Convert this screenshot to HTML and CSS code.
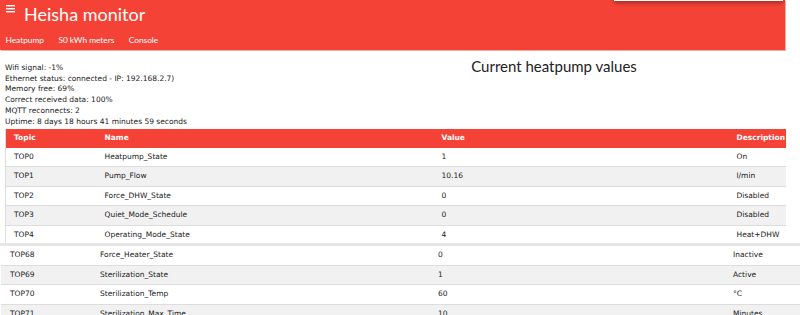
FILE: index.html
```html
<html>
    <head>
        <title>Heisha monitor</title>
        <link rel="stylesheet" href="styles.css">
    </head>
    <body>
        <div id="topbar">
            <div class="brand">
                <svg class="burger" width="10" height="8" viewBox="0 0 10 8">
                    <rect x="0" y="0" width="9" height="1.4" fill="#fff"/>
                    <rect x="0" y="3" width="9" height="1.4" fill="#fff"/>
                    <rect x="0" y="6" width="9" height="1.4" fill="#fff"/>
                </svg>
                <h1>Heisha monitor</h1>
            </div>
            <nav class="tabs">
                <a href="#">Heatpump</a>
                <a href="#">S0 kWh meters</a>
                <a href="#">Console</a>
            </nav>
            <div class="dropdown"></div>
        </div>

        <div class="summary">
            <div class="status">
                <div>Wifi signal: -1%</div>
                <div>Ethernet status: connected - IP: 192.168.2.7)</div>
                <div>Memory free: 69%</div>
                <div>Correct received data: 100%</div>
                <div>MQTT reconnects: 2</div>
                <div>Uptime: 8 days 18 hours 41 minutes 59 seconds</div>
            </div>
            <h2>Current heatpump values</h2>
        </div>

        <div class="shot first">
            <table class="values">
                <colgroup>
                    <col class="c-topic"><col class="c-name"><col class="c-value"><col class="c-desc">
                </colgroup>
                <tr class="head"><th>Topic</th><th>Name</th><th>Value</th><th>Description</th></tr>
                <tr><td>TOP0</td><td>Heatpump_State</td><td>1</td><td>On</td></tr>
                <tr class="alt"><td>TOP1</td><td>Pump_Flow</td><td>10.16</td><td>l/min</td></tr>
                <tr><td>TOP2</td><td>Force_DHW_State</td><td>0</td><td>Disabled</td></tr>
                <tr class="alt"><td>TOP3</td><td>Quiet_Mode_Schedule</td><td>0</td><td>Disabled</td></tr>
                <tr><td>TOP4</td><td>Operating_Mode_State</td><td>4</td><td>Heat+DHW</td></tr>
            </table>
        </div>

        <div class="shot second">
            <table class="values">
                <colgroup>
                    <col class="c-topic2"><col class="c-name2"><col class="c-value"><col class="c-desc2">
                </colgroup>
                <tr><td>TOP68</td><td>Force_Heater_State</td><td>0</td><td>Inactive</td></tr>
                <tr class="alt"><td>TOP69</td><td>Sterilization_State</td><td>1</td><td>Active</td></tr>
                <tr><td>TOP70</td><td>Sterilization_Temp</td><td>60</td><td>°C</td></tr>
                <tr class="alt"><td>TOP71</td><td>Sterilization_Max_Time</td><td>10</td><td>Minutes</td></tr>
            </table>
        </div>
    </body>
</html>
```

FILE: styles.css
```css
body{
    margin: 0;
    font-family: "DejaVu Sans", Verdana, sans-serif;
    font-size: 7.5px;
    color: #1a1a1a;
    overflow: hidden;
}
*{
    box-sizing: border-box;
}
table{
    font-size: inherit;
    color: inherit;
}

#topbar{
    position: relative;
    width: 785px;
    height: 50px;
    background: #f44336;
    box-shadow: 1px 1px 0 #f8aaa4;
    color: #fff;
}
.brand{
    display: flex;
    align-items: flex-start;
    height: 34px;
    padding: 2px 0 0 6px;
}
.burger{
    margin-top: 3px;
}
h1{
    margin: 0 0 0 8px;
    font-family: Lato, "Open Sans", sans-serif;
    font-size: 18px;
    font-weight: normal;
    line-height: 24px;
}
.tabs{
    display: flex;
    gap: 14.5px;
    padding-left: 5.5px;
}
.tabs a{
    color: #fff;
    text-decoration: none;
    font-family: Lato, "Open Sans", sans-serif;
    font-size: 8.3px;
    line-height: 12px;
}
.dropdown{
    position: absolute;
    left: 614px;
    top: -10px;
    width: 169px;
    height: 11px;
    background: #fff;
    box-shadow: 0 2px 4px rgba(0, 0, 0, .35);
}

.summary{
    display: flex;
    padding: 7px 12px 0 5px;
}
.status{
    width: 315px;
    margin-top: 6px;
    line-height: 10.7px;
}
h2{
    flex: 1;
    margin: 0;
    text-align: center;
    font-family: Lato, "Open Sans", sans-serif;
    font-size: 15px;
    font-weight: normal;
    line-height: 18px;
    color: #222;
}

.shot.first{
    height: 114px;
    margin-top: 2px;
    padding-left: 5px;
    overflow: hidden;
}
.shot.second{
    border-top: 3px solid #e6e6e6;
    padding-left: 1px;
}
.values{
    border-collapse: collapse;
    table-layout: fixed;
    white-space: nowrap;
}
.first .values{
    width: 780px;
    border-left: 1px solid #ddd;
}
.second .values{
    width: 799px;
}
.c-topic{ width: 95px; }
.c-topic2{ width: 95px; }
.c-name{ width: 337px; }
.c-name2{ width: 338px; }
.c-value{ width: 295px; }
.c-desc{ width: 53px; }
.c-desc2{ width: 71px; }

.values th, .values td{
    padding: 4px 4px;
    line-height: 10.5px;
    text-align: left;
    border-bottom: 1px solid #ddd;
}
.values th:first-child, .values td:first-child{
    padding-left: 8px;
}
.second .values td:first-child{
    padding-left: 9px;
}
.values .head{
    background: #f44336;
    color: #fff;
}
.values .head th{
    border-bottom: none;
}
.values .alt{
    background: #f1f1f1;
}
```
